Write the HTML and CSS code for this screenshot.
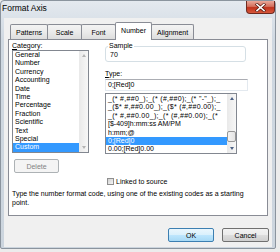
FILE: index.html
```html
<!DOCTYPE html>
<html lang="en">
<head>
  <meta charset="UTF-8">
  <title>Format Axis</title>
  <link rel="stylesheet" href="styles.css">
</head>
<body>

  <div class="window">
    <div class="titlebar">
      <span class="title">Format Axis</span>
      <span class="close">
        <svg width="11" height="9" viewBox="0 0 11 9">
          <path d="M2 1.5 L9 7.5 M9 1.5 L2 7.5" stroke="#5a1d14" stroke-width="3" stroke-linecap="square"/>
          <path d="M2 1.5 L9 7.5 M9 1.5 L2 7.5" stroke="#fff" stroke-width="1.6" stroke-linecap="square"/>
        </svg>
      </span>
    </div>

    <div class="dialog">
      <div class="tabs">
        <span class="tab">Patterns</span>
        <span class="tab">Scale</span>
        <span class="tab">Font</span>
        <span class="tab active">Number</span>
        <span class="tab">Alignment</span>
      </div>

      <div class="panel">
        <div class="columns">
          <div class="col-left">
            <div class="label"><u>C</u>ategory:</div>
            <div class="listbox cat-list">
              <ul class="items">
                <li>General</li>
                <li>Number</li>
                <li>Currency</li>
                <li>Accounting</li>
                <li>Date</li>
                <li>Time</li>
                <li>Percentage</li>
                <li>Fraction</li>
                <li>Scientific</li>
                <li>Text</li>
                <li>Special</li>
                <li class="selected">Custom</li>
              </ul>
              <div class="scrollbar disabled">
                <span class="arrow up"></span>
                <span class="track"></span>
                <span class="arrow down"></span>
              </div>
            </div>
            <button class="btn delete" disabled>Delete</button>
          </div>

          <div class="col-right">
            <fieldset class="sample">
              <legend>Sample</legend>
              <div class="sample-value">70</div>
            </fieldset>
            <div class="label type-label"><u>T</u>ype:</div>
            <div class="textbox">0;[Red]0</div>
            <div class="listbox code-list">
              <ul class="items">
                <li class="long">_(* #,##0_);_(* (#,##0);_(* "-"_);_</li>
                <li class="long">_($* #,##0.00_);_($* (#,##0.00);_</li>
                <li class="long">_(* #,##0.00_);_(* (#,##0.00);_(*</li>
                <li>[$-409]h:mm:ss AM/PM</li>
                <li>h:mm;@</li>
                <li class="selected">0;[Red]0</li>
                <li>0.00;[Red]0.00</li>
              </ul>
              <div class="scrollbar">
                <span class="arrow up"></span>
                <span class="track"><span class="thumb"></span></span>
                <span class="arrow down"></span>
              </div>
            </div>
            <label class="check"><span class="box"></span>Linked to source</label>
          </div>
        </div>
        <p class="hint">Type the number format code, using one of the existing codes as a starting<br>point.</p>
      </div>

      <div class="buttons">
        <button class="btn ok">OK</button>
        <button class="btn">Cancel</button>
      </div>
    </div>
  </div>

</body>
</html>
```

FILE: styles.css
```css
body {
  margin: 0;
  background-color: #ececec;
  font-family: "Liberation Sans", Arial, sans-serif;
  font-size: 7px;
  color: #000;
}
.window {
  width: 276px;
  height: 249px;
  box-sizing: border-box;
  border: 1px solid #8b949e;
  border-radius: 4px 4px 2px 2px;
  background: linear-gradient(#e4e9ef, #cfd8e1 40px, #ccd5de);
}
.titlebar {
  height: 17px;
  display: flex;
  justify-content: space-between;
  align-items: flex-start;
}
.title {
  font-size: 8.5px;
  padding: 2px 0 0 1px;
  line-height: 11px;
}
.close {
  width: 29px;
  height: 13px;
  box-sizing: border-box;
  border: 1px solid #6e2a20;
  border-top: none;
  border-radius: 0 0 4px 4px;
  background: linear-gradient(#eaa89a, #d4705d 45%, #c0321c 55%, #d8583c);
  display: flex;
  justify-content: center;
  align-items: center;
}
.dialog {
  margin: 0 3px;
  height: 229px;
  box-sizing: border-box;
  padding: 4px 4px 0;
  background-color: #f0f0f0;
}
.tabs {
  display: flex;
  align-items: flex-end;
  height: 18px;
  margin: 0 0 -1px 2px;
  position: relative;
  z-index: 1;
}
.tab {
  height: 15px;
  box-sizing: border-box;
  min-width: 35px;
  padding: 0 5px;
  margin-bottom: 1px;
  margin-right: -1px;
  border: 1px solid #898c95;
  border-bottom: none;
  border-radius: 2px 2px 0 0;
  background: linear-gradient(#f3f3f3, #ebebeb 50%, #dddddd);
  display: flex;
  align-items: center;
  justify-content: center;
}
.tab.active {
  height: 18px;
  margin-bottom: 0;
  padding-bottom: 2px;
  background: #fff;
  position: relative;
  z-index: 2;
}
.panel {
  background-color: #fff;
  border: 1px solid #898c95;
  height: 177px;
  box-sizing: border-box;
  padding: 2px 3px 0;
}
.columns {
  display: grid;
  grid-template-columns: 77px 1fr;
  column-gap: 16px;
}
.label {
  height: 8px;
  line-height: 8px;
}
.listbox {
  display: flex;
  border: 1px solid #828790;
  background: #fff;
  box-sizing: border-box;
}
.cat-list {
  height: 103px;
}
.items {
  list-style: none;
  margin: 0;
  padding: 0;
  flex: 1;
  min-width: 0;
  overflow: hidden;
  white-space: nowrap;
}
.items li {
  height: 8.4px;
  line-height: 8.4px;
  padding-left: 2px;
}
.items li.long {
  letter-spacing: 0.3px;
}
.items li.selected {
  background-color: #3399ff;
  color: #fff;
}
.scrollbar {
  width: 9px;
  display: flex;
  flex-direction: column;
  background: linear-gradient(90deg, #e9e9e9, #f7f7f7);
}
.arrow {
  height: 9px;
  display: flex;
  justify-content: center;
  align-items: center;
}
.arrow::before {
  content: "";
  border-left: 2.5px solid transparent;
  border-right: 2.5px solid transparent;
}
.arrow.up::before {
  border-bottom: 3px solid #4d6185;
}
.arrow.down::before {
  border-top: 3px solid #4d6185;
}
.disabled .arrow.up::before {
  border-bottom-color: #b4b4b4;
}
.disabled .arrow.down::before {
  border-top-color: #b4b4b4;
}
.track {
  flex: 1;
}
.thumb {
  display: block;
  margin: 28px 0 0;
  height: 11px;
  border: 1px solid #979797;
  border-radius: 2px;
  box-sizing: border-box;
  background: linear-gradient(90deg, #f3f3f3, #e4e4e4);
}
.btn {
  font-family: "Liberation Sans", Arial, sans-serif;
  font-size: 7px;
  height: 14px;
  padding: 0;
  border: 1px solid #707070;
  border-radius: 2px;
  background: linear-gradient(#f2f2f2, #ebebeb 50%, #dddddd 51%, #cfcfcf);
  color: #000;
}
.delete {
  display: block;
  width: 45px;
  margin: 6px 0 0 2px;
  border-color: #adb2b5;
  background: #f4f4f4;
  color: #838383;
}
.sample {
  margin: 0;
  width: 141px;
  box-sizing: border-box;
  padding: 1px 4px 2px;
  border: 1px solid #d5dfe5;
  border-radius: 3px;
}
.sample legend {
  padding: 0 1px;
  margin-left: -2px;
  line-height: 8px;
}
.sample-value {
  line-height: 8px;
}
.type-label {
  margin-top: 8px;
}
.textbox {
  margin-top: 1px;
  width: 143px;
  height: 12px;
  box-sizing: border-box;
  border: 1px solid #e3e9ef;
  border-top-color: #abadb3;
  padding-left: 2px;
  line-height: 10px;
}
.code-list {
  margin-top: 2px;
  width: 132px;
  height: 61px;
}
.code-list .items {
  padding-top: 1px;
}
.check {
  display: flex;
  align-items: center;
  gap: 2px;
  margin: 23px 0 0 2px;
  height: 8px;
}
.check .box {
  width: 7px;
  height: 7px;
  box-sizing: border-box;
  border: 1px solid #8f8f8f;
  background: linear-gradient(135deg, #d0d0d0, #f6f6f6);
}
.hint {
  margin: 4px 0 0;
  line-height: 9px;
}
.buttons {
  display: flex;
  justify-content: flex-end;
  gap: 8px;
  margin: 12px -1px 0 0;
}
.buttons .btn {
  width: 47px;
}
.btn.ok {
  width: 46px;
  border-color: #3c7fb1;
  background: linear-gradient(#eaf6fd, #d9f0fc 50%, #bee6fd 51%, #a7d9f5);
}
```
